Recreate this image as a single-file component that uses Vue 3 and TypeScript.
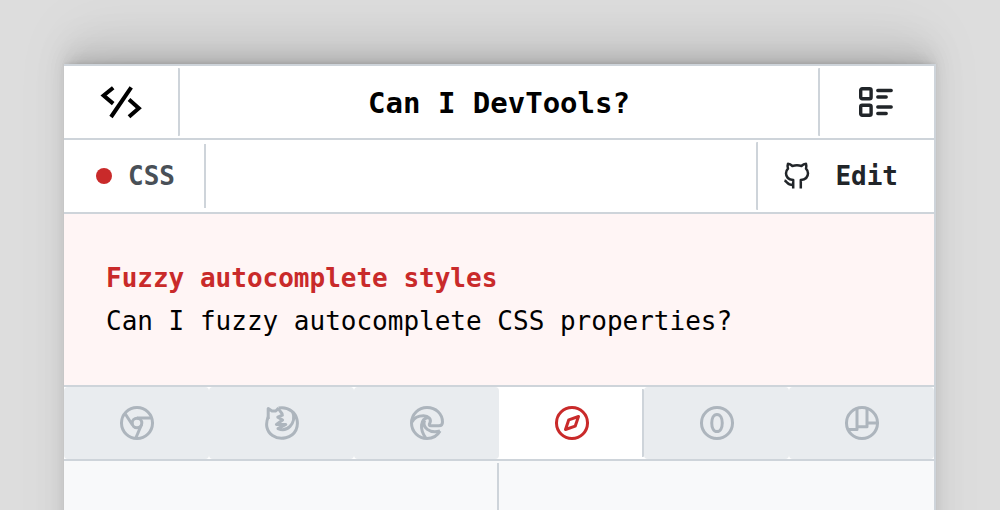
<script setup lang="ts">
interface Tab {
  name: string
  paths: string[]
  active?: boolean
}

const ring = 'M17 1.5a15.5 15.5 0 1 1 0 31a15.5 15.5 0 1 1 0-31z'

const tabs: Tab[] = [
  {
    name: 'Chrome',
    paths: [ring, 'M17 12.2a4.8 4.8 0 1 1 0 9.6a4.8 4.8 0 1 1 0-9.6z', 'M17 12H31', 'M5 7.5L12.5 19', 'M21.6 18.5L15.8 32'],
  },
  {
    name: 'Firefox',
    paths: [
      'M3.2 13V2.6L7 5H10.8L13.6 2',
      'M3.2 11C0.2 18 1.4 25.5 7.5 29.5C15.5 35 27 32 31 24C34 17 32 9 26.5 5C22.5 1.8 18 1.2 13.6 2',
      'M13.6 2C13.4 5.4 18 6.4 17.4 9.2L12.8 11.2L17.6 14L11.4 18.4H20.8L13 22.6C17.5 24.6 22 23.4 25 20.4C28.6 16.6 29.4 11 28 6.5',
    ],
  },
  {
    name: 'Edge',
    paths: [
      'M30 25C27 30.5 22 32.5 17 32.5A15.5 15.5 0 0 1 17 1.5C26 1.5 32.5 8 32.5 16C32.5 18.3 31.2 19.8 29 19.8H21C19 19.8 19 18.4 19.8 17.2C21.8 13 18.5 9.8 13.5 9.8C8 9.8 4 12.2 2 16',
      'M18 11.5C10.5 13 9 23 16 32.3',
      'M14.6 14.5C11.8 21 19.5 28.2 30 25',
    ],
  },
  { name: 'Safari', active: true, paths: [ring, 'M23.5 10.5L20.2 20.2L10.5 23.5L13.8 13.8Z'] },
  { name: 'Opera', paths: [ring, 'M17 8.4C24 8.4 24 25.6 17 25.6C10 25.6 10 8.4 17 8.4Z'] },
  { name: 'Polypane', paths: [ring, 'M12 2.5V23.6H3.5', 'M12 20.8H22V2.5', 'M22 17H32'] },
]
</script>

<template>
  <div class="page">
    <main class="card">
      <header class="row">
        <a class="cell logo" href="#" aria-label="Home">
          <svg width="42" height="34" viewBox="0 0 42 34" fill="none" stroke="currentColor" stroke-width="4">
            <path d="M13.2 2.7L3.6 10.5L13.2 18.6M31.2 2.4L11 32M29 14.6L38.8 23.2L29 31.8" />
          </svg>
        </a>
        <h1 class="title">Can I DevTools?</h1>
        <button class="cell menu" type="button" aria-label="List">
          <svg width="36" height="32" viewBox="0 0 36 32" fill="none" stroke="currentColor" stroke-width="3.4" stroke-linecap="round" stroke-linejoin="round">
            <rect x="2.7" y="2.7" width="10.4" height="10" rx="1.5" />
            <rect x="2.7" y="19.2" width="10.4" height="10" rx="1.5" />
            <path d="M19.8 4.5H33.2M19.8 11H28.2M19.8 21H33.2M19.8 27.5H28.2" />
          </svg>
        </button>
      </header>

      <nav class="row">
        <a class="category" href="#"><span class="dot"></span>CSS</a>
        <a class="cell edit" href="#">
          <svg width="28" height="28" viewBox="0 0 28 28" fill="none" stroke="currentColor" stroke-width="2.5" stroke-linejoin="round">
            <path d="M10.2 26.5V18C5.5 17.5 3 15 3 11.2C3 9.3 3.8 7.8 5 6.6C4.4 5 4.4 3.4 5 1.8C6.8 1.8 8.2 2.8 9.4 4C12.3 3.2 15.7 3.2 18.4 4C19.6 2.8 21.2 1.8 23 1.8C23.5 3.4 23.6 5 23 6.6C24.2 7.8 25 9.3 25 11.2C25 15 22.5 17.5 17.8 18V26.5" />
            <path d="M1.5 18.5C4.5 19.5 3.5 23 10.2 23" />
          </svg>
          Edit
        </a>
      </nav>

      <section class="intro">
        <h2>Fuzzy autocomplete styles</h2>
        <p>Can I fuzzy autocomplete CSS properties?</p>
      </section>

      <div class="tabs">
        <button v-for="tab in tabs" :key="tab.name" type="button" class="tab" :class="{ active: tab.active }" :aria-label="tab.name">
          <svg width="34" height="34" viewBox="0 0 34 34" fill="none" stroke="currentColor" stroke-width="3" stroke-linejoin="round">
            <path v-for="d in tab.paths" :key="d" :d="d" />
          </svg>
        </button>
      </div>

      <div class="panels">
        <div class="panel first"></div>
        <div class="panel"></div>
      </div>
    </main>
  </div>
</template>

<style>
body {
  margin: 0;
}
</style>

<style scoped>
.page {
  box-sizing: border-box;
  height: 100vh;
  padding: 64px 64px 0;
  overflow: hidden;
  display: flex;
  flex-direction: column;
  background: #dddddd;
  color: #000;
  font-family: "DejaVu Sans Mono", "Liberation Mono", monospace;
  font-size: 26px;
}
.card {
  flex: 1;
  display: flex;
  flex-direction: column;
  margin-bottom: -120px;
  border-top: 2px solid #ced4da;
  border-right: 2px solid #ced4da;
  background: #fff;
  box-shadow:
    0 -1px 2px rgb(0 0 0 / 3%),
    0 -3px 4px -2px rgb(0 0 0 / 5%),
    0 -7px 10px -3px rgb(0 0 0 / 6%),
    0 -14px 20px -4px rgb(0 0 0 / 8%),
    0 -24px 36px -4px rgb(0 0 0 / 7%),
    0 -40px 60px -4px rgb(0 0 0 / 5%);
}
a {
  color: inherit;
  text-decoration: none;
}
button {
  margin: 0;
  padding: 0;
  border: 0;
  font: inherit;
}
svg {
  display: block;
}
.row {
  display: flex;
  height: 72px;
  border-bottom: 2px solid #ced4da;
}
.cell {
  box-sizing: border-box;
  display: flex;
  align-items: center;
  justify-content: center;
  margin: 2px 0;
  border-radius: 1px;
  background: #fff;
}
.logo,
.menu {
  width: 116px;
}
.logo {
  border-right: 2px solid #ced4da;
}
.menu {
  padding-right: 2px;
  border-left: 2px solid #ced4da;
  color: #212529;
}
.title {
  flex: 1;
  margin: 0;
  font-size: 29px;
  line-height: 74px;
  text-align: center;
}
.category {
  display: flex;
  align-items: center;
  gap: 16px;
  margin: 4px 0;
  padding: 0 29px 0 32px;
  border-right: 2px solid #ced4da;
  color: #495057;
  font-weight: bold;
}
.dot {
  width: 16px;
  height: 16px;
  border-radius: 50%;
  background: #c92a2a;
}
.edit {
  gap: 24px;
  margin-left: auto;
  padding: 0 36px 0 25px;
  border-left: 2px solid #ced4da;
  color: #212529;
  font-weight: bold;
}
.intro {
  padding: 43px 42px 42px;
  border-bottom: 2px solid #ced4da;
  background: #fff5f5;
  line-height: 43px;
}
.intro h2,
.intro p {
  margin: 0;
  font-size: 26px;
}
.intro h2 {
  color: #c92a2a;
}
.tabs {
  display: grid;
  grid-template-columns: repeat(6, 1fr);
  height: 72px;
  border-bottom: 2px solid #ced4da;
}
.tab {
  display: flex;
  align-items: center;
  justify-content: center;
  border-radius: 4px;
  background: #e9ecef;
  color: #adb5bd;
}
.tab.active {
  margin: 2px 0;
  padding-left: 2px;
  border-right: 2px solid #ced4da;
  border-radius: 1px;
  background: #fff;
  color: #c92a2a;
}
.panels {
  flex: 1;
  display: grid;
  grid-template-columns: 1fr 1fr;
  background: #f8f9fa;
}
.first {
  margin-top: 2px;
  border-right: 2px solid #ced4da;
}
</style>
